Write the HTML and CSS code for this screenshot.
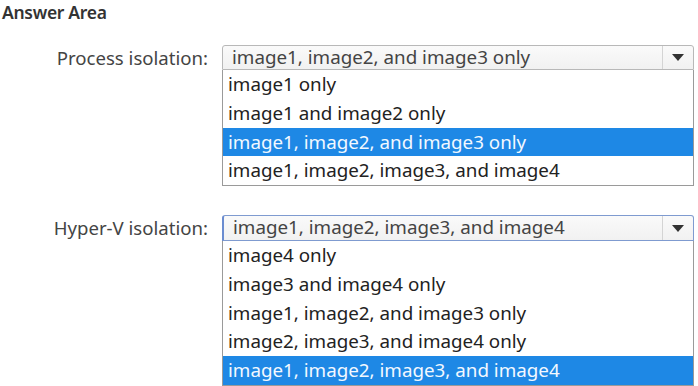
FILE: index.html
```html
<!DOCTYPE html>
<html>
<head>
<meta charset="utf-8">
<link rel="stylesheet" href="styles.css">
</head>
<body>
<div class="page">
  <h1 class="title">Answer Area</h1>
  <div class="field first">
    <div class="label">Process isolation:</div>
    <div class="select">
      <div class="head">
        <span class="value">image1, image2, and image3 only</span>
        <span class="arrow"><svg width="12" height="7" viewBox="0 0 12 7"><path d="M0 0H12L6 7Z" fill="#333"/></svg></span>
      </div>
      <ul class="list">
        <li>image1 only</li>
        <li>image1 and image2 only</li>
        <li class="sel">image1, image2, and image3 only</li>
        <li>image1, image2, image3, and image4</li>
      </ul>
    </div>
  </div>
  <div class="field second">
    <div class="label">Hyper-V isolation:</div>
    <div class="select focus">
      <div class="head">
        <span class="value">image1, image2, image3, and image4</span>
        <span class="arrow"><svg width="12" height="7" viewBox="0 0 12 7"><path d="M0 0H12L6 7Z" fill="#333"/></svg></span>
      </div>
      <ul class="list">
        <li>image4 only</li>
        <li>image3 and image4 only</li>
        <li>image1, image2, and image3 only</li>
        <li>image2, image3, and image4 only</li>
        <li class="sel">image1, image2, image3, and image4</li>
      </ul>
    </div>
  </div>
</div>
</body>
</html>
```

FILE: styles.css
```css
html, body {
  margin: 0;
  padding: 0;
  background: #ffffff;
}
body {
  font-family: "Noto Sans", "Open Sans", sans-serif;
  color: #2a2a2a;
  width: 698px;
  height: 386px;
  overflow: hidden;
}
.page {
  padding: 0 0 0 2px;
}
.title {
  margin: 0;
  font-size: 17.5px;
  font-weight: 600;
  line-height: 24px;
  color: #333;
  letter-spacing: -0.3px;
}
.field {
  display: flex;
  align-items: flex-start;
  gap: 14px;
}
.first {
  margin-top: 21px;
}
.second {
  margin-top: 29px;
}
.label {
  width: 206px;
  text-align: right;
  font-size: 18.6px;
  line-height: 25px;
  color: #444;
  white-space: nowrap;
}
.select {
  width: 472px;
}
.head {
  height: 25px;
  display: flex;
  align-items: stretch;
  border: 1px solid #b8b8b8;
  border-radius: 3px 3px 0 0;
  background: linear-gradient(#fafafa, #f1f1f1);
  box-sizing: border-box;
}
.focus .head {
  height: 26px;
  border-color: #7f9bd0;
  border-left: 2px solid #6a8cd0;
}
.value {
  flex: 1;
  padding-left: 9px;
  font-size: 18.8px;
  line-height: 23px;
  color: #444;
  white-space: nowrap;
}
.arrow {
  width: 30px;
  border-left: 1px solid #d4d4d4;
  display: flex;
  align-items: center;
  justify-content: center;
}
.list {
  list-style: none;
  margin: 0;
  padding: 0;
  border: 1px solid #9a9a9a;
  border-top: none;
  box-sizing: border-box;
  background: #fff;
}
.list li {
  height: 28.75px;
  line-height: 28px;
  padding-left: 5px;
  font-size: 18.8px;
  color: #222;
  white-space: nowrap;
}
.list li.sel {
  background: #1e88e5;
  color: #f2f8ff;
}
```
